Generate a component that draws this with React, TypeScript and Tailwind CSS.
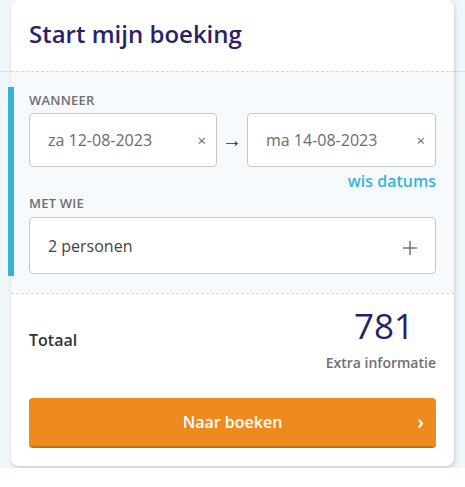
import React from "react";

export default function App() {
  return (
    <div
      className="w-full bg-white"
      style={{ fontFamily: '"Open Sans", "Liberation Sans", sans-serif' }}
    >
      <div className="h-[468px] bg-[linear-gradient(to_bottom,#eef8fb_71px,#d9e0e3_71px,#d9e0e3_72px,#eef8fb_72px)] pl-[11px]">
        <div className="relative w-[443px] h-[466px] rounded-[8px] bg-white shadow-[1px_2px_4px_rgba(0,0,0,0.18)] flex flex-col">
          <div className="h-[71px] px-[18px] flex items-center pb-[4px]">
            <h1 className="text-[24px] leading-[32px] font-semibold text-[#2b1f6b]">
              Start mijn boeking
            </h1>
          </div>
          <div className="relative border-t border-dashed border-[#d5dade] bg-[#f6fafc] px-[18px] pt-[18px] h-[222px]">
            <div className="absolute left-[-3px] top-[15px] w-[6px] h-[189px] bg-[#36b2d6]" />
            <div className="text-[13px] font-semibold text-[#6f6f6f] leading-[20px] tracking-[0.2px]">
              WANNEER
            </div>
            <div className="mt-[3px] flex items-center">
              <div className="w-[188px] h-[54px] rounded-[4px] border border-[#c9c9c9] bg-white flex items-center justify-between pl-[18px] pr-[10px]">
                <span className="text-[16px] text-[#6b6b6b]">za 12-08-2023</span>
                <span className="text-[15px] text-[#6b6b6b]">×</span>
              </div>
              <div className="w-[30px] flex justify-center text-[20px] leading-[24px] text-[#333]">→</div>
              <div className="w-[189px] h-[54px] rounded-[4px] border border-[#c9c9c9] bg-white flex items-center justify-between pl-[18px] pr-[10px]">
                <span className="text-[16px] text-[#6b6b6b]">ma 14-08-2023</span>
                <span className="text-[15px] text-[#6b6b6b]">×</span>
              </div>
            </div>
            <div className="flex justify-end mt-[3px]">
              <span className="text-[16px] font-semibold text-[#3bb2d8] leading-[22px]">wis datums</span>
            </div>
            <div className="mt-[1px] text-[13px] font-semibold text-[#6f6f6f] leading-[20px] tracking-[0.2px]">
              MET WIE
            </div>
            <div className="mt-[4px] h-[57px] rounded-[4px] border border-[#c9c9c9] bg-white flex items-center justify-between pl-[18px] pr-[18px]">
              <span className="text-[16px] text-[#444]">2 personen</span>
              <svg width="14" height="14" viewBox="0 0 14 14" className="mt-[4px]">
                <path d="M7 0v14M0 7h14" stroke="#777" strokeWidth="1.6" />
              </svg>
            </div>
          </div>
          <div className="border-t border-dashed border-[#d5dade] px-[18px] flex-1 flex flex-col">
            <div className="flex items-start justify-between pt-[12px]">
              <span className="text-[16px] leading-[24px] font-semibold text-[#333] mt-[22px]">Totaal</span>
              <div className="flex flex-col items-end">
                <span className="text-[35px] leading-[40px] text-[#2b1f6b] pr-[22px]">781</span>
                <span className="text-[14px] font-semibold text-[#6f6f6f] mt-[8px] leading-[18px]">
                  Extra informatie
                </span>
              </div>
            </div>
            <button className="mt-[26px] relative h-[50px] w-full rounded-[4px] bg-[#ee8a1e] border-b-2 border-[#c96f10] flex items-center justify-center text-white text-[16px] font-semibold">
              Naar boeken
              <span className="absolute right-[12px] top-[9px] text-[20px] font-semibold">›</span>
            </button>
          </div>
        </div>
      </div>
    </div>
  );
}
